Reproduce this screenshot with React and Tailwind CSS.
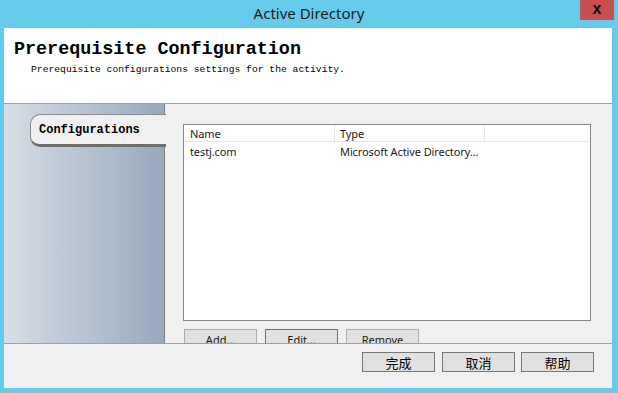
export default function App() {
  const mono = { fontFamily: '"Liberation Mono", "Noto Sans CJK SC", monospace' }
  const ui = { fontFamily: '"Noto Sans", "Liberation Sans", sans-serif' }
  const cjk = { fontFamily: '"Noto Sans CJK SC", "Liberation Sans", sans-serif' }

  return (
    <div className="w-[618px] h-[393px] bg-[#66cbea] flex flex-col overflow-hidden">
      {/* Title bar */}
      <div className="relative h-[28px] flex items-center justify-center shrink-0">
        <span className="text-[15px] text-[#1a1a1a] leading-none -mt-[2px]" style={ui}>Active Directory</span>
        <div className="absolute right-[4px] top-0 w-[34px] h-[20px] bg-[#c75050] flex items-center justify-center">
          <span className="text-[#111] text-[16px] font-bold leading-none -mt-[3px]" style={{ fontFamily: '"Liberation Sans", sans-serif' }}>x</span>
        </div>
      </div>

      {/* Client area */}
      <div className="ml-[4px] w-[608px] h-[360px] bg-[#f0f0f0] flex flex-col shrink-0">
        {/* Header */}
        <div className="h-[76px] bg-white border-b border-[#a0a0a0] pl-[10px] pt-[12px] shrink-0">
          <div className="text-[18.4px] font-bold leading-[20px] text-black" style={mono}>Prerequisite Configuration</div>
          <div className="text-[9.7px] leading-[12px] text-black pl-[17px] mt-[4px]" style={mono}>
            Prerequisite configurations settings for the activity.
          </div>
        </div>

        {/* Middle */}
        <div className="h-[239px] flex shrink-0">
          <div className="w-[161px] h-full border-r border-[#808080] bg-gradient-to-r from-[#d7dee6] to-[#98a9be] pt-[10px] pl-[26px] shrink-0">
            <div className="-mr-[2px] h-[33px] bg-[#f0f0f0] border-t border-l border-[#8a8a8a] rounded-l-[10px] flex items-center pl-[8px] border-b-[3px] border-b-[#6e6e6e]">
              <span className="text-[12px] font-bold text-black" style={mono}>Configurations</span>
            </div>
          </div>

          <div className="flex-1 h-full overflow-hidden pl-[18px] pt-[20px] flex flex-col">
            {/* List view */}
            <div className="w-[408px] h-[197px] border border-[#828790] bg-white flex flex-col shrink-0">
              <div className="h-[17px] flex border-b border-[#e5e5e5] text-[11px] tracking-[-0.1px] text-[#1a1a1a] shrink-0" style={ui}>
                <div className="w-[151px] border-r border-[#e5e5e5] pl-[6px] leading-[17px]">Name</div>
                <div className="w-[150px] border-r border-[#e5e5e5] pl-[5px] leading-[17px]">Type</div>
              </div>
              <div className="flex text-[11px] tracking-[-0.1px] text-[#1a1a1a] pt-[1px]" style={ui}>
                <div className="w-[151px] pl-[6px] leading-[17px]">testj.com</div>
                <div className="pl-[5px] leading-[17px]">Microsoft Active Directory…</div>
              </div>
            </div>

            <div className="flex gap-[8px] mt-[8px] pl-[1px] shrink-0">
              <button className="w-[73px] h-[23px] border border-[#adadad] bg-[#e1e1e1] text-[11px] text-[#1a1a1a] leading-[13px] flex justify-center pt-[3px]" style={ui}>Add…</button>
              <button className="w-[73px] h-[23px] border border-[#3c7fb1] bg-[#e1e1e1] text-[11px] text-[#1a1a1a] leading-[13px] flex justify-center pt-[3px]" style={ui}>Edit…</button>
              <button className="w-[73px] h-[23px] border border-[#adadad] bg-[#e1e1e1] text-[11px] text-[#1a1a1a] leading-[13px] flex justify-center pt-[3px]" style={ui}>Remove</button>
            </div>
          </div>
        </div>

        {/* Bottom bar */}
        <div className="flex-1 border-t border-[#a0a0a0] flex justify-end items-start pt-[8px] pr-[18px]">
          <div className="flex">
            <button className="w-[73px] h-[20px] border border-[#777] bg-[#e1e1e1] text-[13px] text-black leading-none" style={cjk}>完成</button>
            <button className="ml-[7px] w-[73px] h-[20px] border border-[#777] bg-[#e1e1e1] text-[13px] text-black leading-none" style={cjk}>取消</button>
            <button className="ml-[6px] w-[73px] h-[20px] border border-[#777] bg-[#e1e1e1] text-[13px] text-black leading-none" style={cjk}>帮助</button>
          </div>
        </div>
      </div>
    </div>
  )
}
